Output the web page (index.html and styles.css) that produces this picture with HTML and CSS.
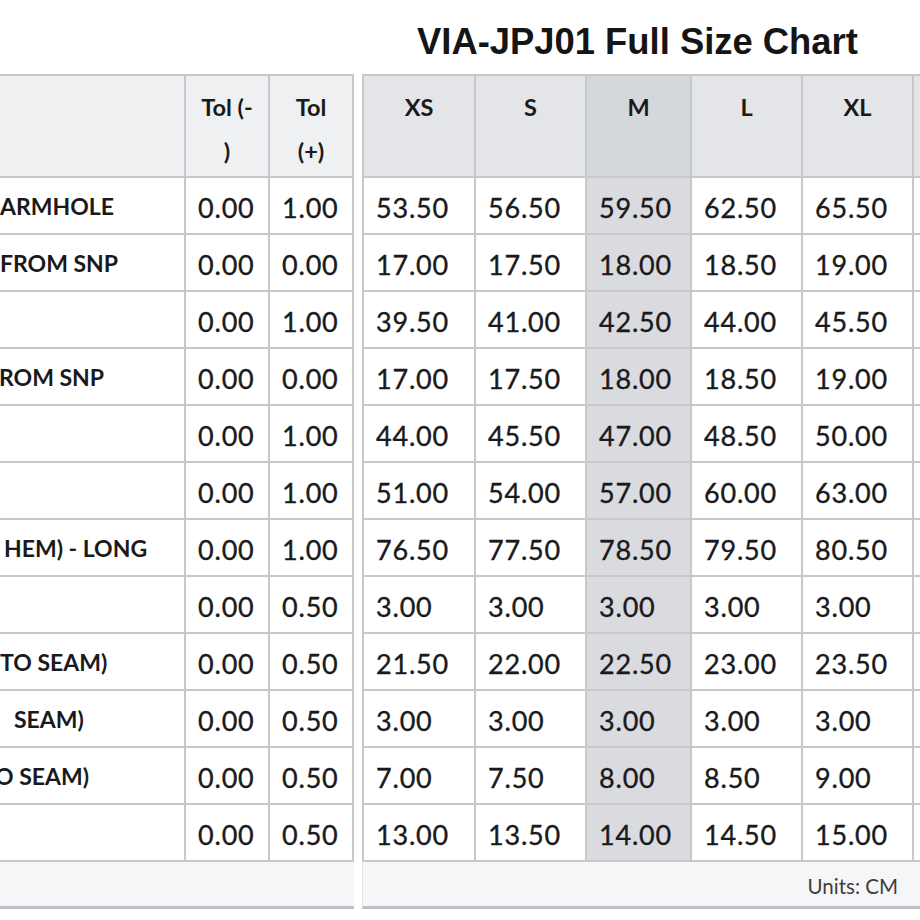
FILE: index.html
```html
<!DOCTYPE html>
<html lang="en">
<head>
<meta charset="utf-8">
<title>VIA-JPJ01 Full Size Chart</title>
<link rel="stylesheet" href="styles.css">
</head>
<body>
<div class="page">
  <h1 class="title">VIA-JPJ01 Full Size Chart</h1>
  <div class="charts">
    <table class="chart spec">
      <thead>
        <tr class="head">
          <th class="c-label"></th>
          <th class="c-tol">Tol (-<wbr>)</th>
          <th class="c-tol">Tol (+)</th>
        </tr>
      </thead>
      <tbody>
        <tr><td class="label">ARMHOLE</td><td>0.00</td><td>1.00</td></tr>
        <tr><td class="label">FROM SNP</td><td>0.00</td><td>0.00</td></tr>
        <tr><td class="label"></td><td>0.00</td><td>1.00</td></tr>
        <tr><td class="label cut">ROM SNP</td><td>0.00</td><td>0.00</td></tr>
        <tr><td class="label"></td><td>0.00</td><td>1.00</td></tr>
        <tr><td class="label"></td><td>0.00</td><td>1.00</td></tr>
        <tr><td class="label pad-s">HEM) - LONG</td><td>0.00</td><td>1.00</td></tr>
        <tr><td class="label"></td><td>0.00</td><td>0.50</td></tr>
        <tr><td class="label">TO SEAM)</td><td>0.00</td><td>0.50</td></tr>
        <tr><td class="label pad-l">SEAM)</td><td>0.00</td><td>0.50</td></tr>
        <tr><td class="label cut-more">O SEAM)</td><td>0.00</td><td>0.50</td></tr>
        <tr><td class="label"></td><td>0.00</td><td>0.50</td></tr>
      </tbody>
      <tfoot>
        <tr class="foot"><td colspan="3"></td></tr>
      </tfoot>
    </table>

    <table class="chart sizes">
      <thead>
        <tr class="head">
          <th class="c-xs">XS</th>
          <th class="c-s">S</th>
          <th class="c-m hl">M</th>
          <th class="c-l">L</th>
          <th class="c-xl">XL</th>
          <th class="c-xxl">XXL</th>
        </tr>
      </thead>
      <tbody>
        <tr><td>53.50</td><td>56.50</td><td class="hl">59.50</td><td>62.50</td><td>65.50</td><td>68.50</td></tr>
        <tr><td>17.00</td><td>17.50</td><td class="hl">18.00</td><td>18.50</td><td>19.00</td><td>19.50</td></tr>
        <tr><td>39.50</td><td>41.00</td><td class="hl">42.50</td><td>44.00</td><td>45.50</td><td>47.00</td></tr>
        <tr><td>17.00</td><td>17.50</td><td class="hl">18.00</td><td>18.50</td><td>19.00</td><td>19.50</td></tr>
        <tr><td>44.00</td><td>45.50</td><td class="hl">47.00</td><td>48.50</td><td>50.00</td><td>51.50</td></tr>
        <tr><td>51.00</td><td>54.00</td><td class="hl">57.00</td><td>60.00</td><td>63.00</td><td>66.00</td></tr>
        <tr><td>76.50</td><td>77.50</td><td class="hl">78.50</td><td>79.50</td><td>80.50</td><td>81.50</td></tr>
        <tr><td>3.00</td><td>3.00</td><td class="hl">3.00</td><td>3.00</td><td>3.00</td><td>3.00</td></tr>
        <tr><td>21.50</td><td>22.00</td><td class="hl">22.50</td><td>23.00</td><td>23.50</td><td>24.00</td></tr>
        <tr><td>3.00</td><td>3.00</td><td class="hl">3.00</td><td>3.00</td><td>3.00</td><td>3.00</td></tr>
        <tr><td>7.00</td><td>7.50</td><td class="hl">8.00</td><td>8.50</td><td>9.00</td><td>9.50</td></tr>
        <tr><td>13.00</td><td>13.50</td><td class="hl">14.00</td><td>14.50</td><td>15.00</td><td>15.50</td></tr>
      </tbody>
      <tfoot>
        <tr class="foot"><td colspan="5" class="units">Units: CM</td><td></td></tr>
      </tfoot>
    </table>
  </div>
</div>
</body>
</html>
```

FILE: styles.css
```css
html, body {
  margin: 0;
  padding: 0;
  background: #ffffff;
  overflow: hidden;
}

.page {
  width: 1140px;
  color: #1d1d1f;
  font-family: Lato, "Open Sans", sans-serif;
}

.title {
  margin: 22px 0 0 417px;
  font-family: "Liberation Sans", Arial, sans-serif;
  font-weight: 700;
  font-size: 36.4px;
  line-height: 40px;
  color: #151515;
}

.charts {
  display: flex;
  align-items: flex-start;
  gap: 8px;
  margin-top: 12px;
}

.chart {
  border-collapse: separate;
  border-spacing: 0;
  table-layout: fixed;
  border-top: 2px solid #c6c8cb;
}

.chart th,
.chart td {
  box-sizing: border-box;
  border-right: 2px solid #c6c8cb;
  border-bottom: 2px solid #c6c8cb;
  padding: 0;
}

.chart .head {
  height: 102px;
}

.chart th {
  vertical-align: top;
  text-align: center;
  font-weight: 700;
  font-size: 23.5px;
  line-height: 44px;
  padding: 9px 12px 0;
  color: #1a1a1a;
}

.spec th.c-tol {
  padding: 9px 14px 0;
}

.spec th { background: #eef0f2; }
.sizes th { background: #e3e5e8; }
.sizes th.hl { background: #d4d7db; }

.chart tbody tr {
  height: 57px;
}

.chart td {
  vertical-align: middle;
  text-align: left;
  padding-left: 12px;
  font-size: 27px;
  letter-spacing: 0.8px;
  padding-top: 3px;
  background: #ffffff;
  color: #1a1a1c;
  -webkit-text-stroke: 0.35px #1a1a1c;
  white-space: nowrap;
  overflow: hidden;
}

.chart td.hl {
  background: #d9dbdf;
}

.spec .c-label { width: 186px; }
.spec .c-tol { width: 84px; }

.spec td.label {
  padding-left: 0;
  padding-top: 0;
  font-weight: 700;
  font-size: 23px;
  letter-spacing: 0;
  -webkit-text-stroke: 0;
}

.spec td.label.pad-s { padding-left: 4px; }
.spec td.label.pad-l { padding-left: 14px; }
.spec td.label.cut { text-indent: -1px; }
.spec td.label.cut-more { text-indent: -5px; }

.sizes .c-xs { width: 114px; border-left: 2px solid #c6c8cb; }
.sizes .c-s { width: 111px; }
.sizes .c-m { width: 105px; }
.sizes .c-l { width: 111px; }
.sizes .c-xl { width: 111px; }
.sizes .c-xxl { width: 111px; }

.sizes tbody td:first-child { border-left: 2px solid #c6c8cb; }

.chart .foot {
  height: 47px;
}

.chart .foot td {
  background: #f5f6f7;
  border-right: none;
  border-bottom: 3px solid #bdbfc2;
  padding: 0;
  -webkit-text-stroke: 0;
}

.sizes .foot td:first-child {
  border-left: 1px solid #e4e5e7;
}

.chart .foot td.units {
  text-align: right;
  padding-right: 16px;
  padding-top: 4px;
  font-size: 20.5px;
  letter-spacing: 0;
  color: #3e3e40;
}
```
